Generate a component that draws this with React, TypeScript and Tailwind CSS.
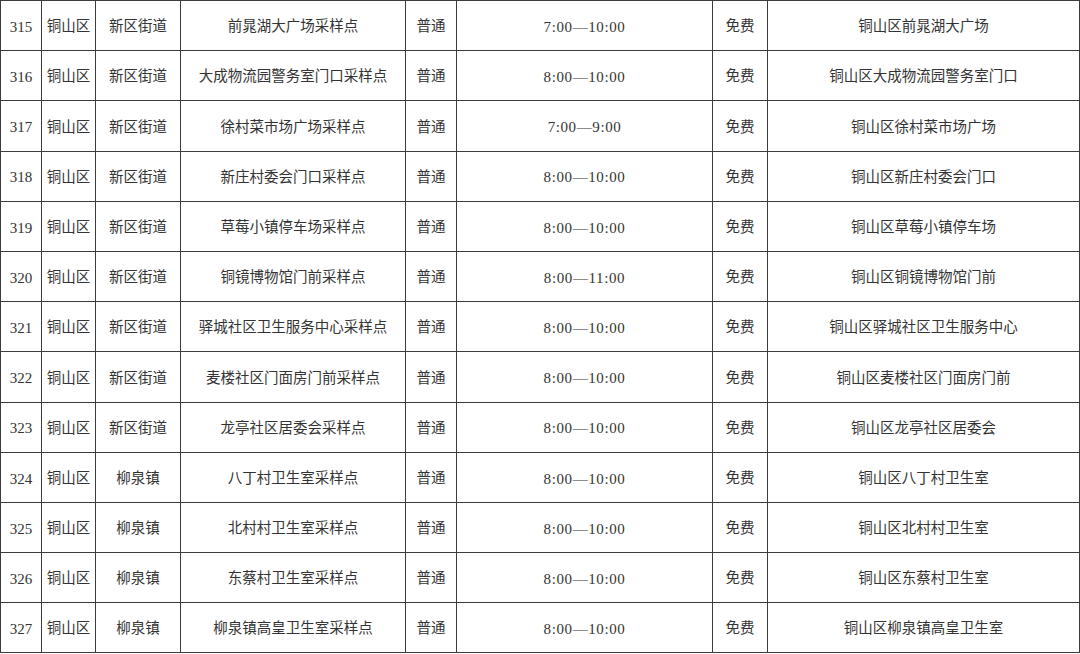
const rows: [string, string, string, string, string][] = [
  ['315', '新区街道', '前晁湖大广场采样点', '7:00—10:00', '铜山区前晁湖大广场'],
  ['316', '新区街道', '大成物流园警务室门口采样点', '8:00—10:00', '铜山区大成物流园警务室门口'],
  ['317', '新区街道', '徐村菜市场广场采样点', '7:00—9:00', '铜山区徐村菜市场广场'],
  ['318', '新区街道', '新庄村委会门口采样点', '8:00—10:00', '铜山区新庄村委会门口'],
  ['319', '新区街道', '草莓小镇停车场采样点', '8:00—10:00', '铜山区草莓小镇停车场'],
  ['320', '新区街道', '铜镜博物馆门前采样点', '8:00—11:00', '铜山区铜镜博物馆门前'],
  ['321', '新区街道', '驿城社区卫生服务中心采样点', '8:00—10:00', '铜山区驿城社区卫生服务中心'],
  ['322', '新区街道', '麦楼社区门面房门前采样点', '8:00—10:00', '铜山区麦楼社区门面房门前'],
  ['323', '新区街道', '龙亭社区居委会采样点', '8:00—10:00', '铜山区龙亭社区居委会'],
  ['324', '柳泉镇', '八丁村卫生室采样点', '8:00—10:00', '铜山区八丁村卫生室'],
  ['325', '柳泉镇', '北村村卫生室采样点', '8:00—10:00', '铜山区北村村卫生室'],
  ['326', '柳泉镇', '东蔡村卫生室采样点', '8:00—10:00', '铜山区东蔡村卫生室'],
  ['327', '柳泉镇', '柳泉镇高皇卫生室采样点', '8:00—10:00', '铜山区柳泉镇高皇卫生室'],
];

// cells are centred, text nudged down a little like the scanned sheet
const cell = 'border border-[#3c3c3c] text-center align-middle p-0 pt-[3px]';

export default function App() {
  return (
    <div className="w-[1080px] h-[654px] overflow-hidden bg-white">
      <table
        className="w-[1079px] border-collapse table-fixed text-[14.5px] text-[#333]"
        style={{ fontFamily: '"Liberation Serif", "Noto Sans CJK SC", serif' }}
      >
        <colgroup>
          <col className="w-[41px]" />
          <col className="w-[54px]" />
          <col className="w-[85px]" />
          <col className="w-[225px]" />
          <col className="w-[51px]" />
          <col className="w-[256px]" />
          <col className="w-[55px]" />
          <col className="w-[312px]" />
        </colgroup>
        <tbody>
          {rows.map(([no, town, site, time, addr]) => (
            <tr key={no} className="h-[50.2px]">
              <td className={`${cell} text-[15px]`}>{no}</td>
              <td className={cell}>铜山区</td>
              <td className={cell}>{town}</td>
              <td className={cell}>{site}</td>
              <td className={cell}>普通</td>
              <td className={`${cell} text-[15px] tracking-[0.6px]`}>{time}</td>
              <td className={cell}>免费</td>
              <td className={cell}>{addr}</td>
            </tr>
          ))}
        </tbody>
      </table>
    </div>
  );
}
